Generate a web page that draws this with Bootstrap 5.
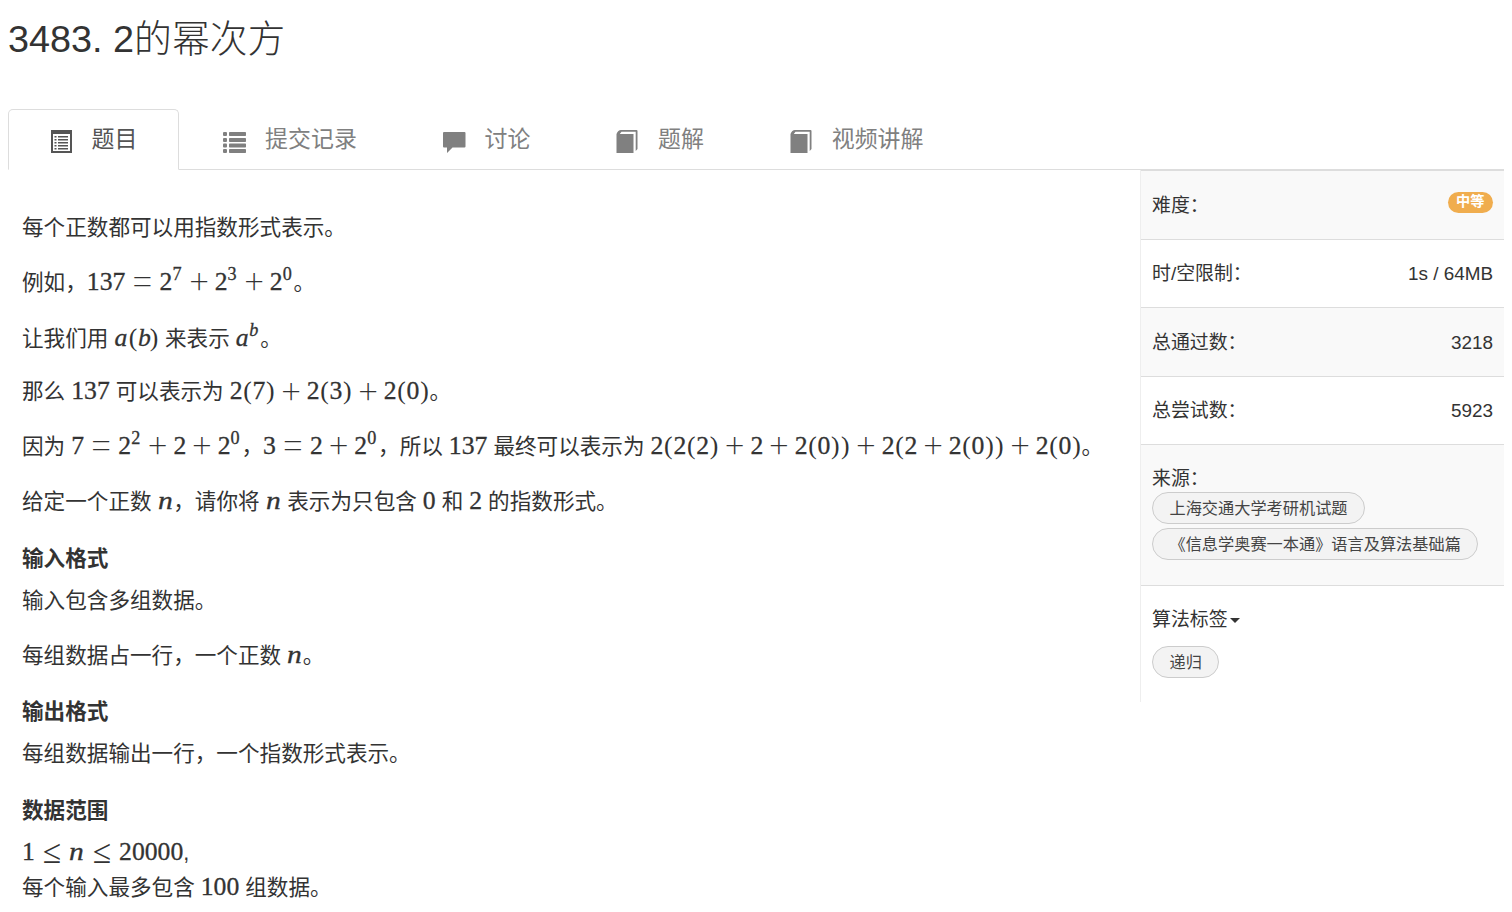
<!DOCTYPE html>
<html lang="zh-CN">

<head>
    <meta charset="UTF-8">
    <meta name="viewport" content="width=device-width, initial-scale=1.0">
    <title>3483. 2的幂次方</title>
    <link href="https://cdn.jsdelivr.net/npm/bootstrap@5.3.3/dist/css/bootstrap.min.css" rel="stylesheet">
    <style>
        body {
            font-family: "Liberation Sans", "Noto Sans CJK SC", sans-serif;
            font-size: 18.9px;
            line-height: 27px;
            color: #333;
            padding: 0 8px;
            overflow: hidden;
        }

        .problem-title {
            font-size: 37.8px;
            font-weight: 300;
            line-height: 42px;
            padding-top: 18px;
            height: 109px;
            margin: 0;
        }

        /* Tabs */
        .problem-tabs {
            --bs-nav-tabs-border-color: #ddd;
            --bs-nav-tabs-border-radius: 5px;
            gap: 2.7px;
            height: 61px;
        }

        .problem-tabs .nav-link {
            display: flex;
            gap: 19px;
            height: 61px;
            padding: 0 40.5px;
            font-size: 22.95px;
            line-height: 58px;
            color: #808080;
        }

        .problem-tabs .nav-link.active {
            color: #555;
            border-color: #ddd #ddd #fff;
        }

        .problem-tabs svg {
            width: 23px;
            height: 23px;
            margin-top: 20px;
            fill: currentColor;
        }

        /* Problem text */
        .problem-text {
            padding: 41px 0 0 14px;
            font-size: 21.6px;
            line-height: 34.56px;
            white-space: nowrap;
        }

        .problem-text p {
            height: 34.56px;
            margin-bottom: 20.25px;
        }

        .problem-text p.two-lines {
            height: auto;
        }

        .problem-text h4 {
            font-size: 21.6px;
            font-weight: 700;
            line-height: 23.76px;
            margin: 27px 0 13.5px;
        }

        /* Formulas */
        .tex {
            font-family: "Liberation Serif", serif;
            font-size: 25.7px;
            line-height: 1;
            -webkit-text-stroke: .3px #333;
        }

        .tex span {
            display: inline-block;
            text-align: center;
            line-height: 1;
        }

        .tex .bin,
        .tex .rel {
            width: .778em;
            margin: 0 .222em;
        }

        .tex .rel {
            margin: 0 .278em;
        }

        .tex b {
            font-family: "Noto Sans CJK SC", sans-serif;
            font-weight: 100;
            font-size: 1.4em;
            line-height: 0;
            margin: 0 -.5em;
            vertical-align: -.145em;
            -webkit-text-stroke: 0;
        }

        .tex .leq b {
            font-family: "Liberation Serif", serif;
            font-weight: 400;
            font-size: 1.3em;
            vertical-align: -.08em;
        }

        .tex .par {
            width: .389em;
            -webkit-text-stroke: 0;
        }

        .tex sup {
            font-size: .707em;
            top: 0;
            line-height: 0;
            vertical-align: .56em;
            margin-right: .1em;
        }

        .tex i {
            display: inline-block;
            line-height: 1;
            text-align: left;
            transform-origin: left;
        }

        .tex .n {
            width: .61em;
            transform: scaleX(1.15);
        }

        .tex .a {
            width: .529em;
        }

        .tex .b {
            width: .429em;
        }

        /* Sidebar */
        .info-side {
            width: 364px;
            height: 532px;
            border-left: 1px solid #eee;
        }

        .info-row {
            height: 68.5px;
            padding: 20.5px 11px 0;
            border-top: 1px solid #ddd;
        }

        .info-row:nth-child(odd) {
            background: #f9f9f9;
        }

        .info-row.sources {
            height: 141px;
            padding-top: 19.5px;
        }

        .info-row.algo {
            padding-top: 19.5px;
        }

        .level {
            height: 21px;
            padding: 0 8.5px;
            border-radius: 11px;
            background: #f0ad4e;
            color: #fff;
            font-size: 14.2px;
            font-weight: 700;
            line-height: 18px;
        }

        .tag {
            display: block;
            width: max-content;
            height: 32px;
            padding: 0 16.5px;
            border: 1px solid #ccc;
            border-radius: 16px;
            background: #f3f3f3;
            color: #444;
            font-size: 16.2px;
            line-height: 30px;
            text-decoration: none;
        }

        .tag + .tag {
            margin-top: 4px;
        }

        .algo .tag {
            margin-top: 13px;
        }

        .arrow-down {
            display: inline-block;
            margin-left: 2px;
            vertical-align: middle;
            border-top: 5px solid #333;
            border-left: 5px solid transparent;
            border-right: 5px solid transparent;
        }
    </style>
</head>

<body>
    <h1 class="problem-title">3483. 2的幂次方</h1>

    <!-- Tabs -->
    <ul class="nav nav-tabs problem-tabs">
        <li class="nav-item">
            <a class="nav-link active" href="#">
                <svg viewBox="0 0 23 23"><path fill-rule="evenodd" d="M1 0h21v23H1zM3 4v17h17V4z"/><path d="M4.500 6h2v1.500h-2zM8 6h10v1.500H8zM4.500 9h2v1.500h-2zM8 9h10v1.500H8zM4.500 12h2v1.500h-2zM8 12h10v1.500H8zM4.500 15h2v1.500h-2zM8 15h10v1.500H8zM4.500 18h2v1.500h-2zM8 18h10v1.500H8z"/></svg>
                <span>题目</span>
            </a>
        </li>
        <li class="nav-item">
            <a class="nav-link" href="#">
                <svg viewBox="0 0 23 23"><rect y="2" width="4" height="4" rx="1"/><rect x="6" y="2" width="17" height="4" rx=".7"/><rect y="8" width="4" height="4" rx="1"/><rect x="6" y="8" width="17" height="4" rx=".7"/><rect y="13.500" width="4" height="4" rx="1"/><rect x="6" y="13.500" width="17" height="4" rx=".7"/><rect y="19" width="4" height="4" rx="1"/><rect x="6" y="19" width="17" height="4" rx=".7"/></svg>
                <span>提交记录</span>
            </a>
        </li>
        <li class="nav-item">
            <a class="nav-link" href="#">
                <svg viewBox="0 0 23 23"><path d="M1 2h20.500q1 0 1 1v13.500q0 1-1 1H9.500L4 23v-5.500H1q-1 0-1-1V3q0-1 1-1z"/></svg>
                <span>讨论</span>
            </a>
        </li>
        <li class="nav-item">
            <a class="nav-link" href="#">
                <svg viewBox="0 0 23 23"><path d="M.5 4Q2 0 5 0h15.500q1 0 1 1v18l-1.800 2V1.700H5.500L3.800 4h13.700v19H.5z"/></svg>
                <span>题解</span>
            </a>
        </li>
        <li class="nav-item">
            <a class="nav-link" href="#">
                <svg viewBox="0 0 23 23"><path d="M.5 4Q2 0 5 0h15.500q1 0 1 1v18l-1.800 2V1.700H5.500L3.800 4h13.700v19H.5z"/></svg>
                <span>视频讲解</span>
            </a>
        </li>
    </ul>

    <div class="d-flex">
        <!-- Problem text -->
        <main class="problem-text flex-grow-1">
            <p>每个正数都可以用指数形式表示。</p>
            <p>例如，<span class="tex">137=2^7+2^3+2^0</span>。</p>
            <p>让我们用 <span class="tex">a(b)</span> 来表示 <span class="tex">a^b</span>。</p>
            <p>那么 <span class="tex">137</span> 可以表示为 <span class="tex">2(7)+2(3)+2(0)</span>。</p>
            <p>因为 <span class="tex">7=2^2+2+2^0</span>，<span class="tex">3=2+2^0</span>，所以 <span class="tex">137</span> 最终可以表示为 <span class="tex">2(2(2)+2+2(0))+2(2+2(0))+2(0)</span>。</p>
            <p>给定一个正数 <span class="tex">n</span>，请你将 <span class="tex">n</span> 表示为只包含 <span class="tex">0</span> 和 <span class="tex">2</span> 的指数形式。</p>
            <h4>输入格式</h4>
            <p>输入包含多组数据。</p>
            <p>每组数据占一行，一个正数 <span class="tex">n</span>。</p>
            <h4>输出格式</h4>
            <p>每组数据输出一行，一个指数形式表示。</p>
            <h4>数据范围</h4>
            <p class="two-lines"><span class="tex">1≤n≤20000</span>,<br>每个输入最多包含 <span class="tex">100</span> 组数据。</p>
        </main>

        <!-- Sidebar -->
        <aside class="info-side flex-shrink-0">
            <div class="info-row d-flex justify-content-between"><span>难度：</span><span class="level">中等</span></div>
            <div class="info-row d-flex justify-content-between"><span>时/空限制：</span><span>1s / 64MB</span></div>
            <div class="info-row d-flex justify-content-between"><span>总通过数：</span><span>3218</span></div>
            <div class="info-row d-flex justify-content-between"><span>总尝试数：</span><span>5923</span></div>
            <div class="info-row sources">
                <div>来源：</div>
                <a class="tag" href="#">上海交通大学考研机试题</a>
                <a class="tag" href="#">《信息学奥赛一本通》语言及算法基础篇</a>
            </div>
            <div class="info-row algo">
                <div>算法标签<span class="arrow-down"></span></div>
                <a class="tag" href="#">递归</a>
            </div>
        </aside>
    </div>

    <script>
        // turn the plain formulas into spaced markup
        document.querySelectorAll(".tex").forEach(el => {
            el.innerHTML = el.textContent.replace(/\^(.)|[+=≤()]|[abn]/g, (m, power) => {
                if (power) return `<sup>${power === "b" ? "<i>b</i>" : power}</sup>`;
                if (m === "+") return '<span class="bin"><b>+</b></span>';
                if (m === "=") return '<span class="rel"><b>=</b></span>';
                if (m === "≤") return '<span class="rel leq"><b>≤</b></span>';
                if (m === "(" || m === ")") return `<span class="par">${m}</span>`;
                return `<i class="${m}">${m}</i>`;
            });
        });
    </script>
    <script src="https://cdn.jsdelivr.net/npm/bootstrap@5.3.3/dist/js/bootstrap.bundle.min.js"></script>
</body>

</html>
